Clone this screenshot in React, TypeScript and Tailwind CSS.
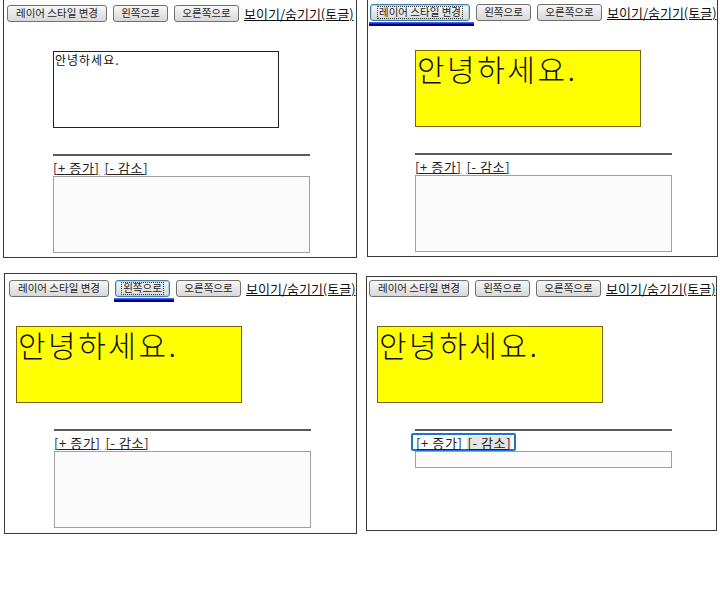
import React from "react"

const font = { fontFamily: '"Noto Sans CJK KR", "Noto Sans", sans-serif' }

interface PanelProps {
  frame: string
  padTop: string
  btnLeft: string
  boxLeft: string
  hrLeft: string
  focus?: number
  yellow?: boolean
  linksFocus?: boolean
  shortArea?: boolean
}

const buttons = [
  { label: "레이어 스타일 변경", w: "w-[100px]" },
  { label: "왼쪽으로", w: "w-[55px]" },
  { label: "오른쪽으로", w: "w-[65px]" },
]

const Panel = ({ frame, padTop, btnLeft, boxLeft, hrLeft, focus, yellow, linksFocus, shortArea }: PanelProps) => {
  return (
    <div className={`${frame} border-[#3a3a3a] bg-white flex flex-col shrink-0 ${padTop}`}>
      <div className={`flex items-center gap-[6px] h-[17px] ${btnLeft}`}>
        {buttons.map((b, i) => (
          <div key={b.label} className="relative">
            <div
              className={`${b.w} h-[17px] flex items-center justify-center rounded-[3px] border text-[10.5px] leading-none text-[#222] whitespace-nowrap bg-gradient-to-b from-[#f7f7f7] to-[#d8d8d8] ${
                focus === i ? "border-[#3c7fb1] shadow-[inset_0_0_0_1px_#a8d8f0]" : "border-[#707070]"
              }`}
            >
              <span className={focus === i ? "outline outline-1 outline-dotted outline-[#333] px-[1px]" : ""}>{b.label}</span>
            </div>
            {focus === i && (
              <div className="absolute left-[-1px] right-[-4px] top-[18px] h-[4px] bg-gradient-to-b from-[#6a7ee0] via-[#0000a8] to-[#000090]" />
            )}
          </div>
        ))}
        <span className="text-[13px] leading-none underline text-[#111] whitespace-nowrap -ml-[1px]">보이기/숨기기(토글)</span>
      </div>

      {yellow ? (
        <div className={`mt-[29px] w-[226px] h-[77px] bg-[#ffff00] border border-[#7d6400] ${boxLeft}`}>
          <div className="text-[30px] leading-[34px] tracking-[2.5px] font-light text-[#111] pl-[1px]">안녕하세요.</div>
        </div>
      ) : (
        <div className={`mt-[29px] w-[226px] h-[77px] bg-white border border-[#222] ${boxLeft}`}>
          <div className="text-[12px] leading-[16px] tracking-[1px] text-[#111] pl-[1px]">안녕하세요.</div>
        </div>
      )}

      <div className={`mt-[26px] w-[257px] h-[2px] bg-[#5a5a5a] ${hrLeft}`} />

      <div className={`mt-[2px] h-[18px] flex items-center ${hrLeft}`}>
        <div
          className={`flex items-center gap-[5px] text-[13px] tracking-[0.6px] leading-none text-[#222] ${
            linksFocus ? "-ml-[4px] px-[3px] h-[18px] border-2 border-[#1a73d0] rounded-[2px]" : "h-[18px]"
          }`}
        >
          <span className="underline">[+ 증가]</span>
          <span className={`underline ${linksFocus ? "bg-[#e4e4e4]" : ""}`}>[- 감소]</span>
        </div>
      </div>

      <div className={`w-[257px] ${shortArea ? "h-[17px]" : "h-[77px]"} bg-[#fbfbfb] border border-[#a0a0a0] ${hrLeft}`} />
    </div>
  )
}

export default function App() {
  return (
    <div className="w-[720px] h-[601px] bg-white overflow-hidden" style={font}>
      <div className="flex items-start">
        <Panel
          frame="ml-[3px] w-[354px] h-[258px] border-x border-b"
          padTop="pt-[5px]"
          btnLeft="ml-[3px]"
          boxLeft="ml-[49px]"
          hrLeft="ml-[49px]"
        />
        <Panel
          frame="ml-[10px] w-[351px] h-[257px] border-x border-b"
          padTop="pt-[4px]"
          btnLeft="ml-[2px]"
          boxLeft="ml-[47px]"
          hrLeft="ml-[47px]"
          focus={0}
          yellow
        />
      </div>
      <div className="flex items-start mt-[15px]">
        <Panel
          frame="ml-[4px] w-[353px] h-[261px] border"
          padTop="pt-[6px]"
          btnLeft="ml-[4px]"
          boxLeft="ml-[11px]"
          hrLeft="ml-[49px]"
          focus={1}
          yellow
        />
        <Panel
          frame="ml-[9px] mt-[3px] w-[351px] h-[255px] border"
          padTop="pt-[3px]"
          btnLeft="ml-[2px]"
          boxLeft="ml-[10px]"
          hrLeft="ml-[48px]"
          yellow
          linksFocus
          shortArea
        />
      </div>
    </div>
  )
}
